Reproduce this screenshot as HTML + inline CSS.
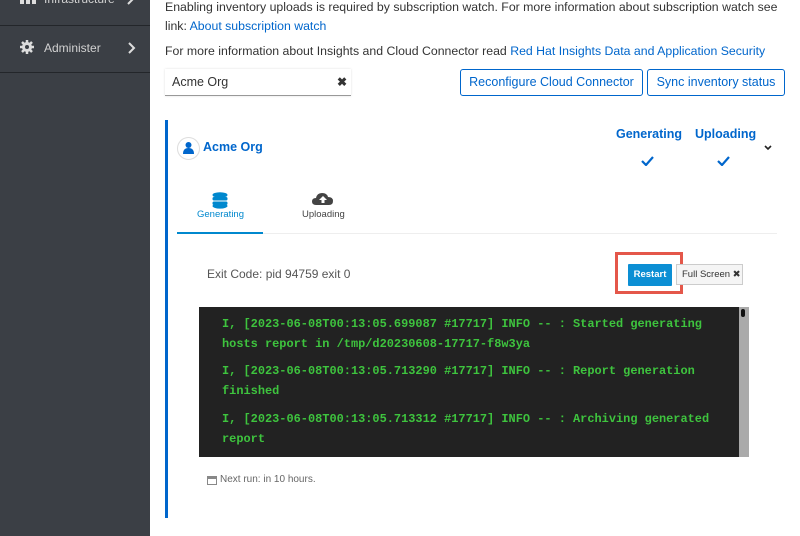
<!DOCTYPE html>
<html><head><style>
*{margin:0;padding:0;box-sizing:border-box}
body{width:800px;height:536px;overflow:hidden;background:#fff;font-family:"Liberation Sans",sans-serif;position:relative;color:#333}
.abs{position:absolute;white-space:nowrap}
.side{position:absolute;left:0;top:0;width:150px;height:536px;background:#3b3f45}
.sep{position:absolute;left:0;width:150px;height:1px;background:#23262a}
.nav{color:#d2d2d2;font-size:12px}
a{color:#0066cc;text-decoration:none}
.btn{position:absolute;border:1px solid #0066cc;border-radius:3px;color:#0066cc;font-size:12.5px;text-align:center;line-height:25px}
.mono{font-family:"Liberation Mono",monospace;color:#3ec43e;font-size:11.95px;font-weight:bold}
.t{font-size:12.3px;color:#333}
</style></head><body>
<div class="side">
  <div class="sep" style="top:25px"></div>
  <div class="sep" style="top:72px"></div>
  <div class="abs nav" style="left:44px;top:-8px">Infrastructure</div>
  <svg class="abs" style="left:127px;top:-6px" width="8" height="12"><path d="M1 0 L6 5 L1 10" stroke="#ddd" stroke-width="2" fill="none"/></svg>
  <svg class="abs" style="left:20px;top:-4px" width="16" height="10"><rect x="0" y="2" width="4" height="6" fill="#ddd"/><rect x="6" y="2" width="4" height="6" fill="#ddd"/><rect x="12" y="2" width="4" height="6" fill="#ddd"/></svg>
  <svg class="abs" style="left:20px;top:40px" width="14" height="14" viewBox="0 0 14 14"><circle cx="7" cy="7" r="5" fill="#ddd"/><g stroke="#ddd" stroke-width="2.5"><line x1="7" y1="0" x2="7" y2="14"/><line x1="0" y1="7" x2="14" y2="7"/><line x1="2" y1="2" x2="12" y2="12"/><line x1="12" y1="2" x2="2" y2="12"/></g><circle cx="7" cy="7" r="2" fill="#3b3f45"/></svg>
  <div class="abs nav" style="left:44px;top:41px">Administer</div>
  <svg class="abs" style="left:128px;top:42px" width="8" height="12"><path d="M1 1 L6 6 L1 11" stroke="#ddd" stroke-width="2" fill="none"/></svg>
</div>
<div class="abs t" style="left:165px;top:0px">Enabling inventory uploads is required by subscription watch. For more information about subscription watch see</div>
<div class="abs t" style="left:165px;top:19px">link: <a>About subscription watch</a></div>
<div class="abs t" style="left:165px;top:44px">For more information about Insights and Cloud Connector read <a>Red Hat Insights Data and Application Security</a></div>
<div class="abs" style="left:165px;top:69px;width:186px;height:27px;border-bottom:1px solid #999;box-shadow:0 0 2px #ddd"></div>
<div class="abs" style="left:172px;top:75px;font-size:12.5px">Acme Org</div>
<div class="abs" style="left:337px;top:75px;font-size:12px;font-weight:bold">✖</div>
<div class="btn" style="left:460px;top:69px;width:183px;height:27px">Reconfigure Cloud Connector</div>
<div class="btn" style="left:647px;top:69px;width:138px;height:27px">Sync inventory status</div>
<div class="abs" style="left:165px;top:120px;width:3px;height:398px;background:#0066cc"></div>
<div class="abs" style="left:177px;top:137px;width:23px;height:23px;border:1px solid #ddd;border-radius:50%"></div>
<svg class="abs" style="left:183px;top:142px" width="11" height="12"><circle cx="5.5" cy="3" r="3" fill="#0066cc"/><path d="M0 12 Q0 6 5.5 6 Q11 6 11 12Z" fill="#0066cc"/></svg>
<div class="abs" style="left:203px;top:140px;font-size:12.5px;font-weight:bold;color:#0066cc">Acme Org</div>
<div class="abs" style="left:616px;top:127px;font-size:12.5px;font-weight:bold;color:#0066cc">Generating</div>
<div class="abs" style="left:695px;top:127px;font-size:12.5px;font-weight:bold;color:#0066cc">Uploading</div>
<svg class="abs" style="left:641px;top:156px" width="13" height="10"><path d="M1 5 L5 9 L12 1" stroke="#0066cc" stroke-width="2.2" fill="none"/></svg>
<svg class="abs" style="left:717px;top:156px" width="13" height="10"><path d="M1 5 L5 9 L12 1" stroke="#0066cc" stroke-width="2.2" fill="none"/></svg>
<svg class="abs" style="left:764px;top:145px" width="8" height="6"><path d="M1 1 L4 4 L7 1" stroke="#222" stroke-width="1.6" fill="none"/></svg>
<svg class="abs" style="left:211px;top:192px" width="18" height="17"><ellipse cx="9" cy="3" rx="7.5" ry="2.8" fill="#0088ce"/><rect x="1.5" y="5" width="15" height="3.5" rx="1.5" fill="#0088ce"/><rect x="1.5" y="9.5" width="15" height="3.5" rx="1.5" fill="#0088ce"/><ellipse cx="9" cy="14" rx="7.5" ry="2.6" fill="#0088ce"/></svg>
<div class="abs" style="left:197px;top:209px;font-size:9.5px;color:#0088ce">Generating</div>
<svg class="abs" style="left:312px;top:192px" width="22" height="14"><path d="M4 13 Q0 13 0 9.5 Q0 6 4 6 Q5 1 10 1 Q15 1 16 5 Q21 5 21 9 Q21 13 17 13Z" fill="#444"/><path d="M11 4 L7 8 H9.5 V11 H12.5 V8 H15Z" fill="#fff"/></svg>
<div class="abs" style="left:302px;top:209px;font-size:9.5px;color:#444">Uploading</div>
<div class="abs" style="left:177px;top:233px;width:600px;height:1px;background:#eee"></div>
<div class="abs" style="left:177px;top:232px;width:86px;height:2px;background:#0088ce"></div>
<div class="abs" style="left:207px;top:267px;font-size:12px;color:#555">Exit Code: pid 94759 exit 0</div>
<div class="abs" style="left:615px;top:252px;width:68px;height:42px;border:3px solid #e4574a"></div>
<div class="abs" style="left:628px;top:264px;width:44px;height:22px;background:#0c8fd4;border-radius:1px;color:#fff;font-size:9.5px;font-weight:bold;text-align:center;line-height:22px">Restart</div>
<div class="abs" style="left:676px;top:264px;width:67px;height:21px;border:1px solid #ccc;background:#f5f5f5;font-size:9.5px;color:#333;line-height:19px;padding-left:5px">Full Screen ✖</div>
<div class="abs" style="left:199px;top:307px;width:550px;height:150px;background:#222"></div>
<div class="abs" style="left:739px;top:307px;width:10px;height:150px;background:#aaa"></div>
<div class="abs" style="left:741px;top:309px;width:4px;height:8px;background:#111;border-radius:2px"></div>
<div class="abs mono" style="left:222px;top:317px">I, [2023-06-08T00:13:05.699087 #17717] INFO -- : Started generating</div>
<div class="abs mono" style="left:222px;top:337px">hosts report in /tmp/d20230608-17717-f8w3ya</div>
<div class="abs mono" style="left:222px;top:364px">I, [2023-06-08T00:13:05.713290 #17717] INFO -- : Report generation</div>
<div class="abs mono" style="left:222px;top:384px">finished</div>
<div class="abs mono" style="left:222px;top:412px">I, [2023-06-08T00:13:05.713312 #17717] INFO -- : Archiving generated</div>
<div class="abs mono" style="left:222px;top:432px">report</div>
<svg class="abs" style="left:207px;top:475px" width="10" height="10"><rect x="0.5" y="1.5" width="9" height="8" fill="none" stroke="#888"/><rect x="0.5" y="1.5" width="9" height="2.5" fill="#888"/></svg>
<div class="abs" style="left:220px;top:474px;font-size:10px;color:#666">Next run: in 10 hours.</div>
</body></html>
